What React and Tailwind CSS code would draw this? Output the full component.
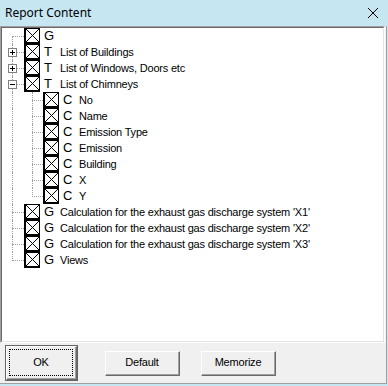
import React from "react";

// tree data
const items = [
  { letter: "G", label: "" },
  { letter: "T", label: "List of Buildings", exp: "+" },
  { letter: "T", label: "List of Windows, Doors etc", exp: "+" },
  {
    letter: "T",
    label: "List of Chimneys",
    exp: "-",
    children: ["No", "Name", "Emission Type", "Emission", "Building", "X", "Y"],
  },
  { letter: "G", label: "Calculation for the exhaust gas discharge system 'X1'" },
  { letter: "G", label: "Calculation for the exhaust gas discharge system 'X2'" },
  { letter: "G", label: "Calculation for the exhaust gas discharge system 'X3'" },
  { letter: "G", label: "Views" },
];

function Check() {
  return (
    <svg width="16" height="16" viewBox="0 0 16 16" className="shrink-0 block">
      <rect x="0" y="0" width="16" height="16" fill="#000" />
      <rect x="2" y="1" width="13" height="13" fill="#fff" />
      <path d="M2 1L15 14M15 1L2 14" stroke="#000" strokeWidth="1" />
    </svg>
  );
}

function Expander({ sign }) {
  return (
    <div className="absolute left-[6px] top-[4px] w-[9px] h-[9px] border border-[#808080] bg-white">
      <div className="absolute left-[1px] top-[3px] w-[5px] h-px bg-black" />
      {sign === "+" && <div className="absolute left-[3px] top-[1px] w-px h-[5px] bg-black" />}
    </div>
  );
}

function Row({ item, first, last }) {
  return (
    <div className="flex items-center h-[16px]">
      <div className="relative w-[22px] h-full shrink-0">
        <div
          className={
            "absolute left-[10px] border-l border-dotted border-[#a0a0a0] " +
            (first ? "top-[8px] bottom-0" : last ? "top-0 h-[9px]" : "top-0 bottom-0")
          }
        />
        <div className="absolute left-[10px] top-[8px] w-[12px] border-t border-dotted border-[#a0a0a0]" />
        {item.exp && <Expander sign={item.exp} />}
      </div>
      <Check />
      <span className="ml-[4px] w-[16px] shrink-0 text-[13px] tracking-normal">{item.letter}</span>
      <span className="whitespace-nowrap">{item.label}</span>
    </div>
  );
}

function ChildRow({ label, last }) {
  return (
    <div className="flex items-center h-[16px]">
      <div className="relative w-[41px] h-full shrink-0">
        <div className="absolute left-[10px] top-0 bottom-0 border-l border-dotted border-[#a0a0a0]" />
        <div
          className={
            "absolute left-[30px] border-l border-dotted border-[#a0a0a0] " +
            (last ? "top-0 h-[9px]" : "top-0 bottom-0")
          }
        />
        <div className="absolute left-[30px] top-[8px] w-[11px] border-t border-dotted border-[#a0a0a0]" />
      </div>
      <Check />
      <span className="ml-[4px] w-[16px] shrink-0 text-[13px] tracking-normal">C</span>
      <span className="whitespace-nowrap">{label}</span>
    </div>
  );
}

function Button({ children, isDefault }) {
  if (isDefault) {
    return (
      <button className="w-[73px] h-[36px] border border-[#646464] bg-[#f0f0f0] p-0">
        <div className="h-full border-t border-l border-white border-r border-b border-r-[#696969] border-b-[#696969]">
          <div className="h-full border-r border-b border-[#a0a0a0] p-[2px]">
            <div className="h-full border border-dotted border-black flex items-center justify-center">
              {children}
            </div>
          </div>
        </div>
      </button>
    );
  }
  return (
    <button className="w-[75px] h-[25px] bg-[#f0f0f0] p-0 border-t border-l border-white border-r border-b border-r-[#696969] border-b-[#696969]">
      <div className="h-full border-r border-b border-[#a0a0a0] flex items-center justify-center">
        {children}
      </div>
    </button>
  );
}

export default function App() {
  return (
    <div
      className="w-[388px] h-[386px] bg-[#c6e6f2] flex flex-col text-black text-[11px] tracking-[-0.2px]"
      style={{ fontFamily: '"Liberation Sans", Arial, sans-serif' }}
    >
      {/* title bar */}
      <div className="h-[26px] shrink-0 flex items-center justify-between pl-[5px] pr-[10px]">
        <span
          className="text-[12px] tracking-normal"
          style={{ fontFamily: '"Segoe UI", "Noto Sans", sans-serif' }}
        >
          Report Content
        </span>
        <svg width="10" height="10" viewBox="0 0 10 10">
          <path d="M0 0L10 10M10 0L0 10" stroke="#000" strokeWidth="1" />
        </svg>
      </div>

      {/* body */}
      <div className="w-[387px] h-[358px] bg-[#f0f0f0] border-r border-b border-[#a0a0a0] flex flex-col">
        <div className="w-[385px] h-[317px] shrink-0 border-t border-l border-[#a0a0a0] border-r border-b border-r-white border-b-white">
          <div className="h-full border-t border-l border-[#696969] border-r border-b border-r-[#e3e3e3] border-b-[#e3e3e3] bg-white overflow-hidden">
            {items.map((it, i) => (
              <React.Fragment key={i}>
                <Row item={it} first={i === 0} last={i === items.length - 1} />
                {it.children &&
                  it.children.map((c, j) => (
                    <ChildRow key={c} label={c} last={j === it.children.length - 1} />
                  ))}
              </React.Fragment>
            ))}
          </div>
        </div>

        <div className="flex-1 flex items-center pl-[5px]">
          <Button isDefault>OK</Button>
          <div className="ml-[27px]">
            <Button>Default</Button>
          </div>
          <div className="ml-[21px]">
            <Button>Memorize</Button>
          </div>
        </div>
      </div>
    </div>
  );
}
